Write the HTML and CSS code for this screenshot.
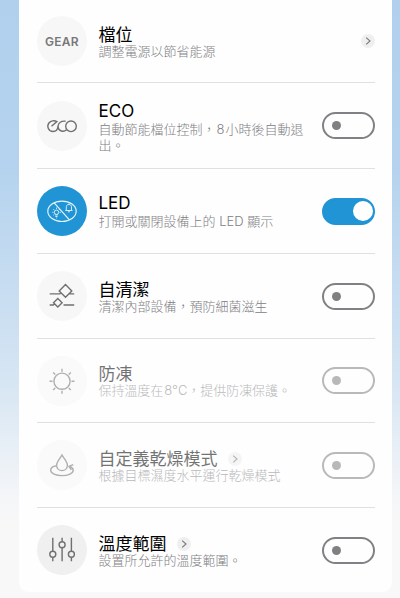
FILE: index.html
```html
<!DOCTYPE html>
<html lang="zh-TW">
<head>
    <meta charset="UTF-8">
    <title>設定</title>
    <link rel="stylesheet" href="styles.css">
</head>
<body>
    <div class="card">
        <div class="row first">
            <div class="icon"><span class="gear">GEAR</span></div>
            <div class="text">
                <h2>檔位</h2>
                <p>調整電源以節省能源</p>
            </div>
            <span class="arrow"><svg viewBox="0 0 14 14"><path d="M5.2 3.7L9 7L5.2 10.3"/></svg></span>
        </div>

        <div class="row eco">
            <div class="icon">
                <svg viewBox="0 0 50 50">
                    <path d="M14.5 25.2L19.9 20.6C17.5 19.2 13.7 19.6 11.9 22C9.5 25.2 11.5 30.5 16 30.5C19.6 30.5 20.8 27.7 21 25.3C21.3 21.9 24.1 19.7 28.6 20.2M29.6 28.8C26.5 31.4 21.6 30.3 21 25.8"/>
                    <circle cx="34" cy="25.3" r="5.3"/>
                </svg>
            </div>
            <div class="text">
                <h2>ECO</h2>
                <p>自動節能檔位控制，<span class="num">8</span>小時後自動退出。</p>
            </div>
            <span class="switch"></span>
        </div>

        <div class="row led">
            <div class="icon blue">
                <svg viewBox="0 0 50 50">
                    <ellipse cx="25" cy="25.3" rx="14.2" ry="10.2"/>
                    <path d="M17.4 17.1L32.4 33.8"/>
                    <g class="thin">
                        <circle cx="19.5" cy="26.3" r="2.2"/>
                        <path d="M18.2 29h2.6M18.4 30.5h2.2M19.2 32h.8M19.5 21.6v1.3M15.3 26.3h1.2M22.6 26.3h1.3M16.4 23.1l.9.9M22.7 23.1l-.9.9M16.4 29.2l.9-.8"/>
                        <path d="M28.3 24.5h7.2M29.3 24V20.8C29.3 17.7 34.5 17.7 34.5 20.8V24M30.8 25.8h2.2M31.9 17.5v1"/>
                    </g>
                </svg>
            </div>
            <div class="text">
                <h2>LED</h2>
                <p>打開或關閉設備上的 LED 顯示</p>
            </div>
            <span class="switch on"></span>
        </div>

        <div class="row">
            <div class="icon">
                <svg viewBox="0 0 50 50">
                    <path d="M12.7 22.9H22.8L24 21.7M32.4 22.9H37.2M12.7 34H16.3L17.4 32.9M26.5 34H37.2M28.5 13.6L34.8 19.9L28.5 26.2L22.2 19.9ZM20.8 27.5L25.1 31.8L20.8 36.1L16.5 31.8Z"/>
                </svg>
            </div>
            <div class="text">
                <h2>自清潔</h2>
                <p>清潔內部設備，預防細菌滋生</p>
            </div>
            <span class="switch"></span>
        </div>

        <div class="row frost disabled">
            <div class="icon">
                <svg viewBox="0 0 50 50">
                    <circle cx="25" cy="25.2" r="8.1"/>
                    <path d="M25 12.7v3M25 34.8v3M12.5 25.2h3M34.5 25.2h3M16.2 16.4l2 2M31.8 32l2 2M16.2 34l2-2M31.8 18.4l2-2"/>
                </svg>
            </div>
            <div class="text">
                <h2>防凍</h2>
                <p>保持溫度在<span class="temp">8°C</span>，提供防凍保護。</p>
            </div>
            <span class="switch"></span>
        </div>

        <div class="row dry disabled">
            <div class="icon">
                <svg viewBox="0 0 50 50">
                    <path d="M25 15C23.4 18.2 19.6 21.6 19.6 25.2C19.6 28.4 22 30.6 25 30.6S30.4 28.4 30.4 25.2C30.4 21.6 26.6 18.2 25 15Z"/>
                    <path d="M19.4 25.8C15.6 26.4 13.7 28.4 13.7 30.2C13.7 33.4 18.7 35.6 25 35.6S36.2 33.2 36.2 30.2C36.2 28.7 35 27.4 33 26.5M36.3 24.7L32 26.3L34.3 30"/>
                </svg>
            </div>
            <div class="text">
                <h2>自定義乾燥模式 <span class="arrow"><svg viewBox="0 0 14 14"><path d="M5.2 3.7L9 7L5.2 10.3"/></svg></span></h2>
                <p>根據目標濕度水平運行乾燥模式</p>
            </div>
            <span class="switch"></span>
        </div>

        <div class="row last">
            <div class="icon dark">
                <svg viewBox="0 0 50 50">
                    <path d="M15.8 12.8V26M15.8 32.4V36.3M25.1 12.8V16.5M25.1 22.9V36.3M34.4 12.8V26M34.4 32.4V36.3"/>
                    <circle cx="15.8" cy="29.2" r="3"/>
                    <circle cx="25.1" cy="19.7" r="3"/>
                    <circle cx="34.4" cy="29.2" r="3"/>
                </svg>
            </div>
            <div class="text">
                <h2>溫度範圍 <span class="arrow"><svg viewBox="0 0 14 14"><path d="M5.2 3.7L9 7L5.2 10.3"/></svg></span></h2>
                <p>設置所允許的溫度範圍。</p>
            </div>
            <span class="switch"></span>
        </div>
    </div>
</body>
</html>
```

FILE: styles.css
```css
* {
    box-sizing: border-box;
}
body {
    margin: 0;
    height: 598px;
    overflow: hidden;
    padding: 0 8px 6px 19px;
    font-family: Inter, "Noto Sans CJK TC", sans-serif;
    background: linear-gradient(#b0d0ed 0, #b5d3ee 170px, #cfe1f2 340px, #dbe8f4 400px, #f5f6f8 500px, #f8f8f8 530px);
}
.card {
    height: 592px;
    padding: 0 17px 0 18px;
    background-color: #fefefe;
    border-radius: 0 0 9px 9px;
}
.row {
    display: flex;
    align-items: center;
    height: 85px;
    border-bottom: 1px solid #e0e0e0;
}
.row.first {
    height: 83px;
}
.row.eco {
    height: 86px;
}
.row.frost {
    height: 84px;
}
.row.last {
    height: 84px;
    border-bottom: none;
}
.icon {
    display: flex;
    align-items: center;
    justify-content: center;
    flex: none;
    width: 50px;
    height: 50px;
    border-radius: 50%;
    background-color: #f7f7f7;
}
.icon svg {
    width: 50px;
    height: 50px;
    fill: none;
    stroke: #707070;
    stroke-width: 1.4;
}
.icon.blue {
    background-color: #2094d4;
}
.icon.blue svg {
    stroke: #e4f4fc;
    stroke-width: 1.2;
}
.icon.blue .thin {
    stroke-width: 0.9;
}
.icon.dark {
    background-color: #f0f0f0;
}
.gear {
    font-size: 12px;
    font-weight: 600;
    letter-spacing: 0.3px;
    color: #777;
}
.text {
    flex: 1;
    align-self: flex-start;
    padding: 27px 0 0 11.5px;
}
.first .text {
    padding-top: 26px;
}
.eco .text {
    padding-top: 19px;
}
.led .text {
    padding-top: 25px;
}
.frost .text {
    padding-top: 26px;
}
h2 {
    display: flex;
    align-items: center;
    margin: 0;
    font-size: 17px;
    font-weight: 400;
    line-height: 18px;
    color: #000;
}
p {
    width: 210px;
    margin: 0;
    font-size: 13px;
    font-weight: 300;
    line-height: 15.5px;
    color: #808084;
}
.eco p, .led p {
    margin-top: 2px;
}
.num {
    margin: 0 1px;
}
.temp {
    margin-left: 1px;
}
.frost p {
    letter-spacing: -0.05px;
}
.arrow {
    display: flex;
    flex: none;
    width: 14px;
    height: 14px;
    border-radius: 50%;
    background-color: #efefef;
}
.arrow svg {
    width: 14px;
    height: 14px;
    fill: none;
    stroke: #777;
    stroke-width: 1.1;
}
h2 .arrow {
    margin-left: 10px;
}
.switch {
    flex: none;
    width: 53px;
    height: 27px;
    padding: 7px 8px;
    border: 2px solid #808184;
    border-radius: 14px;
}
.switch::before {
    content: "";
    display: block;
    width: 9px;
    height: 9px;
    border-radius: 50%;
    background-color: #808080;
}
.switch.on {
    padding: 1.5px 0.5px;
    border-color: #2094d4;
    background-color: #2094d4;
}
.switch.on::before {
    width: 20px;
    height: 20px;
    margin-left: auto;
    background-color: #fff;
}
.disabled .icon, .disabled h2, .disabled p, .disabled .switch {
    opacity: 0.55;
}
```
